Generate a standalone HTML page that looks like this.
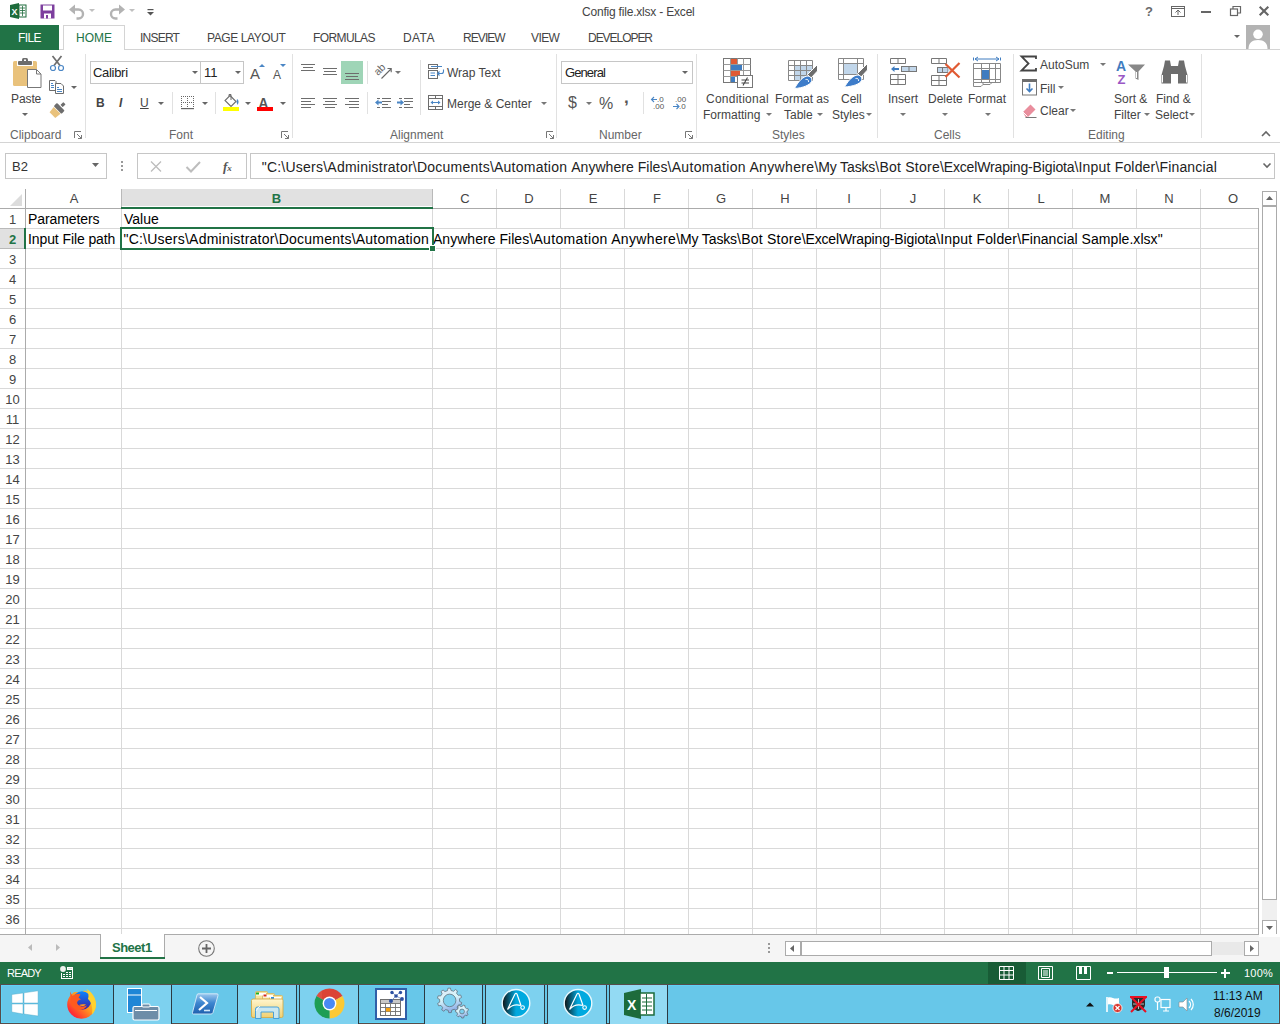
<!DOCTYPE html>
<html><head><meta charset="utf-8"><style>
*{margin:0;padding:0;box-sizing:border-box}
html,body{width:1280px;height:1024px;overflow:hidden;background:#fff;font-family:"Liberation Sans",sans-serif;color:#444}
.a{position:absolute}
.t{position:absolute;white-space:nowrap;line-height:1}
svg{position:absolute;overflow:visible}
.r{font-size:12px;color:#444}
.g{font-size:12px;color:#666}
.dd{position:absolute;width:0;height:0;border-left:3px solid transparent;border-right:3px solid transparent;border-top:3px solid #777}
</style></head><body>
<svg style="left:10px;top:3px" width="17" height="16" viewBox="0 0 17 16"><path d="M0 2 L9 0 L9 16 L0 14 Z" fill="#1d6b3b"/><rect x="9" y="2" width="7" height="12" fill="#fff" stroke="#1d6b3b" stroke-width="1"/><path d="M10 5h5M10 7.5h5M10 10h5M12.5 3v10" stroke="#1d6b3b" stroke-width="0.8"/><text x="1.5" y="11.5" font-size="9" font-weight="bold" fill="#fff" font-family="Liberation Sans">X</text></svg>
<svg style="left:40px;top:4px" width="15" height="15" viewBox="0 0 15 15"><path d="M0.5 0.5h14v14h-14z" fill="#7d3f9e"/><rect x="3" y="1.5" width="9" height="5" fill="#fff"/><rect x="4" y="9.5" width="7" height="5" fill="#fff"/><rect x="6" y="11" width="2" height="3.5" fill="#7d3f9e"/></svg>
<svg style="left:69px;top:4px" width="16" height="14" viewBox="0 0 16 14"><path d="M5 5.5H9.5A4.5 4.5 0 0 1 9.5 14.5H7.5" fill="none" stroke="#b3b3b3" stroke-width="2.4"/><path d="M0 5.5L6 0.5V10.5Z" fill="#b3b3b3"/></svg>
<div class="dd" style="left:89px;top:9px;border-top-color:#c0c0c0"></div>
<svg style="left:109px;top:4px" width="16" height="14" viewBox="0 0 16 14"><path d="M11 5.5H6.5A4.5 4.5 0 0 0 6.5 14.5H8.5" fill="none" stroke="#b3b3b3" stroke-width="2.4"/><path d="M16 5.5L10 0.5V10.5Z" fill="#b3b3b3"/></svg>
<div class="dd" style="left:129px;top:9px;border-top-color:#c0c0c0"></div>
<svg style="left:147px;top:9px" width="7" height="7" viewBox="0 0 7 7"><rect x="0.5" y="0" width="6" height="1.2" fill="#555"/><path d="M0 3 L7 3 L3.5 6.5 Z" fill="#555"/></svg>
<div class="t" style="left:582px;top:6px;font-size:12px;color:#444;letter-spacing:-0.2px">Config file.xlsx - Excel</div>
<div class="t" style="left:1145px;top:5px;font-size:13px;color:#6a6a6a;font-weight:bold">?</div>
<svg style="left:1171px;top:6px" width="14" height="11" viewBox="0 0 14 11"><rect x="0.5" y="0.5" width="13" height="10" fill="none" stroke="#666"/><path d="M1 2.5h12" stroke="#666"/><path d="M7 9V4M4.5 6.5L7 4 9.5 6.5" fill="none" stroke="#666"/></svg>
<div class="a" style="left:1201px;top:11px;width:10px;height:2px;background:#666"></div>
<svg style="left:1230px;top:6px" width="11" height="10" viewBox="0 0 11 10"><rect x="0.5" y="3" width="7" height="6.5" fill="none" stroke="#666" stroke-width="1.2"/><path d="M3 3V0.5h7.5V7H8" fill="none" stroke="#666" stroke-width="1.2"/></svg>
<svg style="left:1259px;top:6px" width="10" height="10" viewBox="0 0 10 10"><path d="M0.7 0.7L9.3 9.3M9.3 0.7L0.7 9.3" stroke="#666" stroke-width="2.1"/></svg>
<div class="a" style="left:0px;top:49px;width:1280px;height:1px;background:#d4d4d4"></div>
<div class="a" style="left:0px;top:25px;width:59px;height:25px;background:#217346"></div>
<div class="t" style="left:18px;top:32px;font-size:12px;color:#fff;letter-spacing:-0.6px">FILE</div>
<div class="a" style="left:63px;top:25px;width:62px;height:25px;border:1px solid #d4d4d4;border-bottom:none;background:#fff"></div>
<div class="t" style="left:76px;top:32px;font-size:12px;color:#217346;">HOME</div>
<div class="t" style="left:140px;top:32px;font-size:12px;color:#444;letter-spacing:-0.77px">INSERT</div>
<div class="t" style="left:207px;top:32px;font-size:12px;color:#444;letter-spacing:-0.42px">PAGE LAYOUT</div>
<div class="t" style="left:313px;top:32px;font-size:12px;color:#444;letter-spacing:-0.6px">FORMULAS</div>
<div class="t" style="left:403px;top:32px;font-size:12px;color:#444;letter-spacing:0.4px">DATA</div>
<div class="t" style="left:463px;top:32px;font-size:12px;color:#444;letter-spacing:-0.93px">REVIEW</div>
<div class="t" style="left:531px;top:32px;font-size:12px;color:#444;letter-spacing:-0.6px">VIEW</div>
<div class="t" style="left:588px;top:32px;font-size:12px;color:#444;letter-spacing:-1.04px">DEVELOPER</div>
<div class="dd" style="left:1234px;top:35px;border-top-color:#666"></div>
<svg style="left:1246px;top:25px" width="24" height="24" viewBox="0 0 24 24"><rect width="24" height="24" fill="#b3b3b3"/><path d="M2.5 24C2.5 18 6 15 12 15C18 15 21.5 18 21.5 24Z" fill="#fff"/><circle cx="12" cy="9.5" r="5.6" fill="#b3b3b3"/><circle cx="12" cy="9.3" r="4.8" fill="#fff"/></svg>
<div class="a" style="left:0px;top:142px;width:1280px;height:1px;background:#d4d4d4"></div>
<div class="a" style="left:85px;top:54px;width:1px;height:84px;background:#e1e1e1"></div>
<div class="a" style="left:292px;top:54px;width:1px;height:84px;background:#e1e1e1"></div>
<div class="a" style="left:556px;top:54px;width:1px;height:84px;background:#e1e1e1"></div>
<div class="a" style="left:696px;top:54px;width:1px;height:84px;background:#e1e1e1"></div>
<div class="a" style="left:877px;top:54px;width:1px;height:84px;background:#e1e1e1"></div>
<div class="a" style="left:1013px;top:54px;width:1px;height:84px;background:#e1e1e1"></div>
<div class="a" style="left:1201px;top:54px;width:1px;height:84px;background:#e1e1e1"></div>
<div class="t" style="left:10px;top:129px;font-size:12px;color:#666;">Clipboard</div>
<div class="t" style="left:169px;top:129px;font-size:12px;color:#666;">Font</div>
<div class="t" style="left:390px;top:129px;font-size:12px;color:#666;">Alignment</div>
<div class="t" style="left:599px;top:129px;font-size:12px;color:#666;">Number</div>
<div class="t" style="left:772px;top:129px;font-size:12px;color:#666;">Styles</div>
<div class="t" style="left:934px;top:129px;font-size:12px;color:#666;">Cells</div>
<div class="t" style="left:1088px;top:129px;font-size:12px;color:#666;">Editing</div>
<svg style="left:74px;top:131px" width="8" height="8" viewBox="0 0 8 8"><path d="M0.5 7V0.5H7" fill="none" stroke="#777"/><path d="M3 3L7.5 7.5M4 7.5H7.5V4" fill="none" stroke="#777"/></svg>
<svg style="left:281px;top:131px" width="8" height="8" viewBox="0 0 8 8"><path d="M0.5 7V0.5H7" fill="none" stroke="#777"/><path d="M3 3L7.5 7.5M4 7.5H7.5V4" fill="none" stroke="#777"/></svg>
<svg style="left:546px;top:131px" width="8" height="8" viewBox="0 0 8 8"><path d="M0.5 7V0.5H7" fill="none" stroke="#777"/><path d="M3 3L7.5 7.5M4 7.5H7.5V4" fill="none" stroke="#777"/></svg>
<svg style="left:685px;top:131px" width="8" height="8" viewBox="0 0 8 8"><path d="M0.5 7V0.5H7" fill="none" stroke="#777"/><path d="M3 3L7.5 7.5M4 7.5H7.5V4" fill="none" stroke="#777"/></svg>
<svg style="left:13px;top:58px" width="29" height="31" viewBox="0 0 29 31"><rect x="0" y="3" width="24" height="25" rx="1.5" fill="#e9c27c"/>
<rect x="4" y="2" width="16" height="6" fill="#fff"/>
<rect x="5" y="3" width="14" height="4" rx="1" fill="#6d6d6d"/><rect x="9" y="0" width="6" height="4" rx="1.5" fill="#6d6d6d"/><rect x="11" y="1.5" width="2" height="1.5" fill="#fff"/>
<path d="M14.5 11.5H23.5L28 16V29.5H14.5Z" fill="#fff" stroke="#777"/><path d="M23.5 11.5V16H28" fill="none" stroke="#777"/></svg>
<div class="t" style="left:11px;top:93px;font-size:12px;color:#444;letter-spacing:-0.1px">Paste</div>
<div class="dd" style="left:22px;top:113px;border-top-color:#666"></div>
<svg style="left:49px;top:55px" width="16" height="16" viewBox="0 0 16 16"><path d="M3.5 1L11 10.5M12.5 1L5 10.5" stroke="#6d6d6d" stroke-width="1.7"/><circle cx="4" cy="13" r="2.5" fill="#fff" stroke="#4a86c5" stroke-width="1.2"/><circle cx="12" cy="13" r="2.5" fill="#fff" stroke="#4a86c5" stroke-width="1.2"/></svg>
<svg style="left:49px;top:80px" width="16" height="15" viewBox="0 0 16 15"><path d="M0.5 0.5H6L7 1.5V10.5H0.5Z" fill="#fff" stroke="#6d6d6d"/><path d="M2 3.5H4M2 5.5H5M2 7.5H5" stroke="#4a86c5"/>
<path d="M6.5 3.5H12L14.5 6V13.5H6.5Z" fill="#fff" stroke="#6d6d6d"/><path d="M8 7.5H10M8 9.5H13M8 11.5H13" stroke="#4a86c5"/></svg>
<div class="dd" style="left:71px;top:86px;border-top-color:#666"></div>
<svg style="left:45px;top:100px" width="22" height="22" viewBox="0 0 22 22"><g transform="translate(14.2 8.4) rotate(45)"><rect x="-5.5" y="-2.3" width="11" height="4.6" rx="1" fill="#6d6d6d"/><path d="M-4.8 2.9H4.8L4 9.6H-4Z" fill="#e9c27c"/><rect x="-1.6" y="-7.4" width="3.2" height="4" rx="0.5" fill="#6d6d6d"/></g></svg>
<div class="a" style="left:90px;top:61px;width:111px;height:23px;border:1px solid #c6c6c6;background:#fff"></div>
<div class="a" style="left:200px;top:61px;width:44px;height:23px;border:1px solid #c6c6c6;background:#fff"></div>
<div class="t" style="left:93px;top:66px;font-size:13px;color:#222;letter-spacing:-0.3px">Calibri</div>
<div class="t" style="left:204px;top:66px;font-size:13px;color:#222;">11</div>
<div class="dd" style="left:192px;top:71px;border-top-color:#666"></div>
<div class="dd" style="left:235px;top:71px;border-top-color:#666"></div>
<div class="t" style="left:250px;top:66px;font-size:15px;color:#555;">A</div>
<svg style="left:259px;top:64px" width="6" height="3" viewBox="0 0 6 3"><path d="M0 3L3 0L6 3Z" fill="#4a86c5"/></svg>
<div class="t" style="left:273px;top:69px;font-size:12px;color:#555;">A</div>
<svg style="left:280px;top:64px" width="6" height="3" viewBox="0 0 6 3"><path d="M0 0L3 3L6 0Z" fill="#4a86c5"/></svg>
<div class="t" style="left:96px;top:97px;font-size:12px;color:#444;font-weight:bold">B</div>
<div class="t" style="left:119px;top:97px;font-size:12px;color:#444;font-style:italic;font-weight:bold">I</div>
<div class="t" style="left:140px;top:97px;font-size:12px;color:#444;text-decoration:underline">U</div>
<div class="dd" style="left:158px;top:102px;border-top-color:#666"></div>
<div class="a" style="left:172px;top:92px;width:1px;height:22px;background:#e1e1e1"></div>
<svg style="left:181px;top:96px" width="14" height="13" viewBox="0 0 14 13"><rect x="0" y="0" width="1" height="1" fill="#666"/><rect x="0" y="6" width="1" height="1" fill="#666"/><rect x="2" y="0" width="1" height="1" fill="#666"/><rect x="2" y="6" width="1" height="1" fill="#666"/><rect x="4" y="0" width="1" height="1" fill="#666"/><rect x="4" y="6" width="1" height="1" fill="#666"/><rect x="6" y="0" width="1" height="1" fill="#666"/><rect x="6" y="6" width="1" height="1" fill="#666"/><rect x="8" y="0" width="1" height="1" fill="#666"/><rect x="8" y="6" width="1" height="1" fill="#666"/><rect x="10" y="0" width="1" height="1" fill="#666"/><rect x="10" y="6" width="1" height="1" fill="#666"/><rect x="12" y="0" width="1" height="1" fill="#666"/><rect x="12" y="6" width="1" height="1" fill="#666"/><rect x="0" y="0" width="1" height="1" fill="#666"/><rect x="6" y="0" width="1" height="1" fill="#666"/><rect x="12" y="0" width="1" height="1" fill="#666"/><rect x="0" y="2" width="1" height="1" fill="#666"/><rect x="6" y="2" width="1" height="1" fill="#666"/><rect x="12" y="2" width="1" height="1" fill="#666"/><rect x="0" y="4" width="1" height="1" fill="#666"/><rect x="6" y="4" width="1" height="1" fill="#666"/><rect x="12" y="4" width="1" height="1" fill="#666"/><rect x="0" y="6" width="1" height="1" fill="#666"/><rect x="6" y="6" width="1" height="1" fill="#666"/><rect x="12" y="6" width="1" height="1" fill="#666"/><rect x="0" y="8" width="1" height="1" fill="#666"/><rect x="6" y="8" width="1" height="1" fill="#666"/><rect x="12" y="8" width="1" height="1" fill="#666"/><rect x="0" y="10" width="1" height="1" fill="#666"/><rect x="6" y="10" width="1" height="1" fill="#666"/><rect x="12" y="10" width="1" height="1" fill="#666"/><rect x="0" y="12" width="13" height="1.2" fill="#666"/></svg>
<div class="dd" style="left:202px;top:102px;border-top-color:#666"></div>
<div class="a" style="left:215px;top:92px;width:1px;height:22px;background:#e1e1e1"></div>
<svg style="left:223px;top:94px" width="17" height="17" viewBox="0 0 17 17"><path d="M7 1.5L13 7.5L8 12.5L2 6.5Z" fill="#fff" stroke="#6d6d6d" stroke-width="1.1"/><path d="M6 2.5V0.5H8V6" fill="none" stroke="#6d6d6d"/><path d="M14 5C16 6 16 9 14.5 11L13.5 8Z" fill="#4a86c5"/><rect x="0" y="13" width="16" height="4" fill="#ffff00"/></svg>
<div class="dd" style="left:245px;top:102px;border-top-color:#666"></div>
<div class="t" style="left:258px;top:95px;font-size:15px;color:#555;font-weight:bold;transform:scaleX(0.9)">A</div>
<div class="a" style="left:257px;top:107px;width:16px;height:4px;background:#ff0000"></div>
<div class="dd" style="left:280px;top:102px;border-top-color:#666"></div>
<svg style="left:301px;top:64px" width="16" height="14" viewBox="0 0 16 14"><rect x="0" y="0" width="14" height="1" fill="#6d6d6d"/><rect x="2" y="3" width="10" height="1" fill="#6d6d6d"/><rect x="0" y="6" width="14" height="1" fill="#6d6d6d"/></svg>
<svg style="left:323px;top:68px" width="16" height="14" viewBox="0 0 16 14"><rect x="0" y="0" width="14" height="1" fill="#6d6d6d"/><rect x="1" y="3" width="12" height="1" fill="#6d6d6d"/><rect x="0" y="6" width="14" height="1" fill="#6d6d6d"/></svg>
<div class="a" style="left:341px;top:61px;width:22px;height:23px;background:#9fd5b7"></div>
<svg style="left:345px;top:73px" width="16" height="14" viewBox="0 0 16 14"><rect x="0" y="0" width="14" height="1" fill="#6d6d6d"/><rect x="1" y="3" width="12" height="1" fill="#6d6d6d"/><rect x="0" y="6" width="14" height="1" fill="#6d6d6d"/></svg>
<div class="a" style="left:367px;top:61px;width:1px;height:23px;background:#e1e1e1"></div>
<svg style="left:375px;top:63px" width="18" height="17" viewBox="0 0 18 17"><text x="-1.5" y="9.5" font-size="10.5" fill="#666" font-family="Liberation Sans" transform="rotate(-45 5 6)">ab</text><path d="M6.5 15.5L16 6M12.5 5.5H16.2V9.2" fill="none" stroke="#666" stroke-width="1.1"/></svg>
<div class="dd" style="left:395px;top:71px;border-top-color:#777"></div>
<svg style="left:301px;top:98px" width="16" height="14" viewBox="0 0 16 14"><rect x="0" y="0" width="14" height="1" fill="#6d6d6d"/><rect x="0" y="3" width="10" height="1" fill="#6d6d6d"/><rect x="0" y="6" width="14" height="1" fill="#6d6d6d"/><rect x="0" y="9" width="10" height="1" fill="#6d6d6d"/></svg>
<svg style="left:323px;top:98px" width="16" height="14" viewBox="0 0 16 14"><rect x="0" y="0" width="14" height="1" fill="#6d6d6d"/><rect x="2" y="3" width="10" height="1" fill="#6d6d6d"/><rect x="0" y="6" width="14" height="1" fill="#6d6d6d"/><rect x="2" y="9" width="10" height="1" fill="#6d6d6d"/></svg>
<svg style="left:345px;top:98px" width="16" height="14" viewBox="0 0 16 14"><rect x="0" y="0" width="14" height="1" fill="#6d6d6d"/><rect x="4" y="3" width="10" height="1" fill="#6d6d6d"/><rect x="0" y="6" width="14" height="1" fill="#6d6d6d"/><rect x="4" y="9" width="10" height="1" fill="#6d6d6d"/></svg>
<div class="a" style="left:367px;top:92px;width:1px;height:22px;background:#e1e1e1"></div>
<svg style="left:375px;top:97px" width="16" height="12" viewBox="0 0 16 12"><rect x="2" y="1" width="3" height="1" fill="#6d6d6d"/><rect x="7" y="1" width="9" height="1" fill="#6d6d6d"/><rect x="7" y="4" width="9" height="1" fill="#6d6d6d"/><rect x="7" y="7" width="6" height="1" fill="#6d6d6d"/><rect x="2" y="10" width="3" height="1" fill="#6d6d6d"/><rect x="7" y="10" width="9" height="1" fill="#6d6d6d"/><path d="M0 5.5L3.5 2.5V4.5H7V6.5H3.5V8.5Z" fill="#4a86c5"/></svg>
<svg style="left:397px;top:97px" width="16" height="12" viewBox="0 0 16 12"><rect x="2" y="1" width="3" height="1" fill="#6d6d6d"/><rect x="7" y="1" width="9" height="1" fill="#6d6d6d"/><rect x="7" y="4" width="9" height="1" fill="#6d6d6d"/><rect x="7" y="7" width="6" height="1" fill="#6d6d6d"/><rect x="2" y="10" width="3" height="1" fill="#6d6d6d"/><rect x="7" y="10" width="9" height="1" fill="#6d6d6d"/><path d="M7 5.5L3.5 2.5V4.5H0V6.5H3.5V8.5Z" fill="#4a86c5"/></svg>
<div class="a" style="left:420px;top:60px;width:1px;height:55px;background:#e1e1e1"></div>
<svg style="left:428px;top:64px" width="17" height="15" viewBox="0 0 17 15"><rect x="0.5" y="0.5" width="9" height="4" fill="#fff" stroke="#6d6d6d"/><rect x="0.5" y="6.5" width="9" height="8" fill="#fff" stroke="#6d6d6d"/><path d="M3 2.5H14M2.5 9H7M2.5 11.5H7" stroke="#4a86c5"/><path d="M15.5 5.5V7.5A2 2 0 0 1 13.5 9.5H9.5M11.5 7.5L9.5 9.5L11.5 11.5" fill="none" stroke="#4a86c5" stroke-width="1.1"/></svg>
<div class="t" style="left:447px;top:67px;font-size:12px;color:#444;">Wrap Text</div>
<svg style="left:428px;top:95px" width="16" height="16" viewBox="0 0 16 16"><rect x="0.5" y="0.5" width="14" height="14" fill="#fff" stroke="#6d6d6d"/><path d="M0.5 3.5H14.5M0.5 11.5H14.5M7.5 0.5V3.5M7.5 11.5V14.5" stroke="#6d6d6d"/><path d="M3 7.5H12" stroke="#4a86c5"/><path d="M2.5 7.5L5 5.5V9.5ZM12.5 7.5L10 5.5V9.5Z" fill="#4a86c5"/></svg>
<div class="t" style="left:447px;top:98px;font-size:12px;color:#444;">Merge &amp; Center</div>
<div class="dd" style="left:541px;top:102px;border-top-color:#777"></div>
<div class="a" style="left:561px;top:61px;width:132px;height:23px;border:1px solid #c6c6c6;background:#fff"></div>
<div class="t" style="left:565px;top:66px;font-size:13px;color:#222;letter-spacing:-0.9px">General</div>
<div class="dd" style="left:682px;top:71px;border-top-color:#666"></div>
<div class="t" style="left:568px;top:95px;font-size:16px;color:#555;">$</div>
<div class="dd" style="left:586px;top:102px;border-top-color:#777"></div>
<div class="t" style="left:599px;top:96px;font-size:16px;color:#555;">%</div>
<div class="t" style="left:624px;top:89px;font-size:17px;color:#555;font-weight:bold">,</div>
<div class="a" style="left:643px;top:92px;width:1px;height:22px;background:#e1e1e1"></div>
<svg style="left:651px;top:96px" width="15" height="14" viewBox="0 0 15 14"><text x="6" y="6" font-size="8" fill="#555" font-family="Liberation Sans">.0</text><text x="2" y="13" font-size="8" fill="#555" font-family="Liberation Sans">.00</text><path d="M0.5 3.5H6M3 1L0.5 3.5L3 6" fill="none" stroke="#4a86c5" stroke-width="1.1"/></svg>
<svg style="left:673px;top:96px" width="15" height="14" viewBox="0 0 15 14"><text x="2" y="6" font-size="8" fill="#555" font-family="Liberation Sans">.00</text><text x="6" y="13" font-size="8" fill="#555" font-family="Liberation Sans">.0</text><path d="M0 10.5H6M3.5 8L6 10.5L3.5 13" fill="none" stroke="#4a86c5" stroke-width="1.1"/></svg>
<svg style="left:723px;top:58px" width="30" height="30" viewBox="0 0 30 30"><rect x="0.5" y="0.5" width="27" height="24" fill="#fff" stroke="#777"/>
<rect x="8" y="1" width="6" height="5" fill="#e05a33"/><rect x="8" y="7" width="11" height="5" fill="#3f7cc0"/><rect x="8" y="13" width="9" height="5" fill="#e05a33"/><rect x="8" y="19" width="4" height="5" fill="#3f7cc0"/>
<path d="M0.5 6.5H27.5M0.5 12.5H27.5M0.5 18.5H27.5M7.5 0.5V24.5M14.5 0.5V24.5M20.5 0.5V24.5" stroke="#999" fill="none"/>
<rect x="8" y="7" width="11" height="5" fill="#3f7cc0"/><rect x="8" y="13" width="9" height="5" fill="#e05a33"/><rect x="8" y="1" width="6" height="5" fill="#e05a33"/><rect x="8" y="19" width="4" height="5" fill="#3f7cc0"/>
<rect x="14.5" y="17.5" width="15" height="12" fill="#fff" stroke="#777"/><path d="M18.5 22H26M18.5 25H26M24.5 19.5L20 27.5" stroke="#444" stroke-width="1.1" fill="none"/></svg>
<div class="t" style="left:706px;top:93px;font-size:12px;color:#444;letter-spacing:0.25px">Conditional</div>
<div class="t" style="left:703px;top:109px;font-size:12px;color:#444;">Formatting</div>
<div class="dd" style="left:766px;top:113px;border-top-color:#777"></div>
<svg style="left:788px;top:60px" width="30" height="29" viewBox="0 0 30 29"><rect x="6" y="5" width="19" height="15" fill="#c1d6ea"/>
<path d="M0.5 0.5H24.5V20.5H0.5Z M0.5 5.5H24.5M0.5 10.5H24.5M0.5 15.5H24.5M6.5 0.5V20.5M12.5 0.5V20.5M18.5 0.5V20.5" stroke="#888" fill="none"/>
<path d="M29.5 4.5L29.5 11L23 18L19.5 14.5Z" fill="#6d6d6d" stroke="#fff" stroke-width="1"/><path d="M19 16C22.5 16 24.5 18.5 23.5 21.5C22 25 15 28 6.5 28.5C9 24 13 17.5 19 16Z" fill="#3d7cc9" stroke="#fff" stroke-width="1"/><path d="M17.5 19.5C19.5 19 21 20 20.5 22" fill="none" stroke="#fff" stroke-width="0.9"/></svg>
<div class="t" style="left:775px;top:93px;font-size:12px;color:#444;">Format as</div>
<div class="t" style="left:784px;top:109px;font-size:12px;color:#444;">Table</div>
<div class="dd" style="left:817px;top:113px;border-top-color:#777"></div>
<svg style="left:838px;top:58px" width="30" height="29" viewBox="0 0 30 29"><rect x="6" y="6" width="13" height="10" fill="#c1d6ea"/>
<path d="M0.5 0.5H25.5V21.5H0.5Z M0.5 5.5H25.5M0.5 16.5H25.5M5.5 0.5V21.5M19.5 0.5V21.5" stroke="#888" fill="none"/>
<path d="M29.5 5.5L29.5 12L23 19L19.5 15.5Z" fill="#6d6d6d" stroke="#fff" stroke-width="1"/><path d="M19 17C22.5 17 24.5 19.5 23.5 22.5C22 26 15 28.5 6.5 29C9 25 13 18.5 19 17Z" fill="#3d7cc9" stroke="#fff" stroke-width="1"/><path d="M17.5 20.5C19.5 20 21 21 20.5 23" fill="none" stroke="#fff" stroke-width="0.9"/></svg>
<div class="t" style="left:841px;top:93px;font-size:12px;color:#444;">Cell</div>
<div class="t" style="left:832px;top:109px;font-size:12px;color:#444;">Styles</div>
<div class="dd" style="left:866px;top:113px;border-top-color:#777"></div>
<svg style="left:890px;top:58px" width="27" height="28" viewBox="0 0 27 28"><path d="M0.5 0.5H15.5V5.5H0.5ZM8 0.5V5.5" fill="none" stroke="#777"/>
<rect x="11.5" y="8.5" width="15" height="5" fill="#c1d6ea" stroke="#777"/><path d="M19 8.5V13.5" stroke="#777"/>
<path d="M1 11L4.5 8V10H9V12H4.5V14Z" fill="#3f7cc0"/>
<path d="M0.5 16.5H15.5V26.5H0.5ZM0.5 21.5H15.5M8 16.5V26.5" fill="none" stroke="#777"/></svg>
<div class="t" style="left:888px;top:93px;font-size:12px;color:#444;">Insert</div>
<div class="dd" style="left:900px;top:113px;border-top-color:#777"></div>
<svg style="left:931px;top:58px" width="30" height="29" viewBox="0 0 30 29"><path d="M0.5 0.5H15.5V5.5H0.5ZM8 0.5V5.5" fill="none" stroke="#777"/>
<rect x="6.5" y="9.5" width="10" height="5" fill="#c1d6ea" stroke="#777"/><path d="M11.5 9.5V14.5" stroke="#777"/><path d="M16.5 9.5L19 12L16.5 14.5Z" fill="#c1d6ea"/>
<path d="M0.5 17.5H15.5V27.5H0.5ZM0.5 22.5H15.5M8 17.5V27.5" fill="none" stroke="#777"/>
<path d="M14.5 6L28.5 19.5M28.5 5L14.5 19" stroke="#e05a33" stroke-width="2.2"/></svg>
<div class="t" style="left:928px;top:93px;font-size:12px;color:#444;">Delete</div>
<div class="dd" style="left:942px;top:113px;border-top-color:#777"></div>
<svg style="left:973px;top:57px" width="29" height="31" viewBox="0 0 29 31"><path d="M0.5 0.5V3.5M27.5 0.5V3.5M2 2H26M5 0L2 2L5 4M23 0L26 2L23 4" fill="none" stroke="#3f7cc0"/>
<rect x="9" y="13" width="7" height="9" fill="#3f7cc0"/>
<path d="M0.5 6.5H27.5V25.5H0.5ZM0.5 11.5H27.5M0.5 22.5H27.5M8.5 6.5V25.5M16.5 6.5V25.5M22.5 6.5V25.5" fill="none" stroke="#888"/>
<path d="M0.5 25.5V29.5H8L10 27.5V25.5M10 27.5H17L19 25.5" fill="none" stroke="#888"/></svg>
<div class="t" style="left:968px;top:93px;font-size:12px;color:#444;">Format</div>
<div class="dd" style="left:985px;top:113px;border-top-color:#777"></div>
<svg style="left:1021px;top:56px" width="16" height="16" viewBox="0 0 16 16"><path d="M15 3V0.5H0.5L7.5 7.5L0.5 14.5H15V12" fill="none" stroke="#444" stroke-width="1.8"/></svg>
<div class="t" style="left:1040px;top:59px;font-size:12px;color:#444;">AutoSum</div>
<div class="dd" style="left:1100px;top:63px;border-top-color:#777"></div>
<svg style="left:1022px;top:79px" width="15" height="17" viewBox="0 0 15 17"><rect x="0.5" y="0.5" width="14" height="15.5" fill="#fff" stroke="#777"/><rect x="0" y="0" width="15" height="3" fill="#6d6d6d"/><path d="M7.5 4.5V12.5M4.5 9.5L7.5 12.5L10.5 9.5" fill="none" stroke="#3f7cc0" stroke-width="1.6"/></svg>
<div class="t" style="left:1040px;top:83px;font-size:12px;color:#444;">Fill</div>
<div class="dd" style="left:1058px;top:86px;border-top-color:#777"></div>
<svg style="left:1022px;top:103px" width="15" height="15" viewBox="0 0 15 15"><path d="M1 9L8.5 1.5L13.5 6.5L6 14H3.5Z" fill="#e98e9d"/><path d="M3.5 14.5H14.5" stroke="#777"/><path d="M1 9L5.5 13.5" stroke="#fff" stroke-width="1"/></svg>
<div class="t" style="left:1040px;top:105px;font-size:12px;color:#444;">Clear</div>
<div class="dd" style="left:1070px;top:109px;border-top-color:#777"></div>
<svg style="left:1116px;top:58px" width="30" height="27" viewBox="0 0 30 27"><text x="0" y="12.5" font-size="14" font-weight="bold" fill="#3f7cc0" font-family="Liberation Sans">A</text><text x="1.5" y="26" font-size="13" font-weight="bold" fill="#9a57c5" font-family="Liberation Sans">Z</text>
<path d="M12 6.5H29L22.5 13.5V22L19.5 20.5V13.5Z" fill="#888"/><path d="M20.5 14V20" stroke="#fff"/></svg>
<div class="t" style="left:1114px;top:93px;font-size:12px;color:#444;">Sort &amp;</div>
<div class="t" style="left:1114px;top:109px;font-size:12px;color:#444;">Filter</div>
<div class="dd" style="left:1144px;top:113px;border-top-color:#777"></div>
<svg style="left:1161px;top:60px" width="27" height="24" viewBox="0 0 27 24"><path d="M3 6L4 0.5H9L10 6H17L18 0.5H23L24 6L26.5 15V23.5H17V12H10V23.5H0.5V15Z" fill="#6d6d6d"/>
<path d="M1.5 15V22.5M25.5 15V22.5" stroke="#fff"/><rect x="10" y="8" width="7" height="6" fill="#6d6d6d"/></svg>
<div class="t" style="left:1156px;top:93px;font-size:12px;color:#444;">Find &amp;</div>
<div class="t" style="left:1155px;top:109px;font-size:12px;color:#444;">Select</div>
<div class="dd" style="left:1189px;top:113px;border-top-color:#777"></div>
<svg style="left:1261px;top:130px" width="10" height="7" viewBox="0 0 10 7"><path d="M1 6L5 2L9 6" fill="none" stroke="#666" stroke-width="1.6"/></svg>
<div class="a" style="left:121px;top:189px;width:312px;height:17px;background:#e1e1e1"></div>
<div class="a" style="left:0px;top:228px;width:25px;height:20px;background:#e1e1e1"></div>
<div class="a" style="left:121px;top:189px;width:1px;height:745px;background:#d9d9d9"></div>
<div class="a" style="left:432px;top:189px;width:1px;height:745px;background:#d9d9d9"></div>
<div class="a" style="left:496px;top:189px;width:1px;height:39px;background:#d9d9d9"></div>
<div class="a" style="left:496px;top:248px;width:1px;height:686px;background:#d9d9d9"></div>
<div class="a" style="left:560px;top:189px;width:1px;height:39px;background:#d9d9d9"></div>
<div class="a" style="left:560px;top:248px;width:1px;height:686px;background:#d9d9d9"></div>
<div class="a" style="left:624px;top:189px;width:1px;height:39px;background:#d9d9d9"></div>
<div class="a" style="left:624px;top:248px;width:1px;height:686px;background:#d9d9d9"></div>
<div class="a" style="left:688px;top:189px;width:1px;height:39px;background:#d9d9d9"></div>
<div class="a" style="left:688px;top:248px;width:1px;height:686px;background:#d9d9d9"></div>
<div class="a" style="left:752px;top:189px;width:1px;height:39px;background:#d9d9d9"></div>
<div class="a" style="left:752px;top:248px;width:1px;height:686px;background:#d9d9d9"></div>
<div class="a" style="left:816px;top:189px;width:1px;height:39px;background:#d9d9d9"></div>
<div class="a" style="left:816px;top:248px;width:1px;height:686px;background:#d9d9d9"></div>
<div class="a" style="left:880px;top:189px;width:1px;height:39px;background:#d9d9d9"></div>
<div class="a" style="left:880px;top:248px;width:1px;height:686px;background:#d9d9d9"></div>
<div class="a" style="left:944px;top:189px;width:1px;height:39px;background:#d9d9d9"></div>
<div class="a" style="left:944px;top:248px;width:1px;height:686px;background:#d9d9d9"></div>
<div class="a" style="left:1008px;top:189px;width:1px;height:39px;background:#d9d9d9"></div>
<div class="a" style="left:1008px;top:248px;width:1px;height:686px;background:#d9d9d9"></div>
<div class="a" style="left:1072px;top:189px;width:1px;height:39px;background:#d9d9d9"></div>
<div class="a" style="left:1072px;top:248px;width:1px;height:686px;background:#d9d9d9"></div>
<div class="a" style="left:1136px;top:189px;width:1px;height:39px;background:#d9d9d9"></div>
<div class="a" style="left:1136px;top:248px;width:1px;height:686px;background:#d9d9d9"></div>
<div class="a" style="left:1200px;top:189px;width:1px;height:745px;background:#d9d9d9"></div>
<div class="a" style="left:0px;top:228px;width:1258px;height:1px;background:#d9d9d9"></div>
<div class="a" style="left:0px;top:248px;width:1258px;height:1px;background:#d9d9d9"></div>
<div class="a" style="left:0px;top:268px;width:1258px;height:1px;background:#d9d9d9"></div>
<div class="a" style="left:0px;top:288px;width:1258px;height:1px;background:#d9d9d9"></div>
<div class="a" style="left:0px;top:308px;width:1258px;height:1px;background:#d9d9d9"></div>
<div class="a" style="left:0px;top:328px;width:1258px;height:1px;background:#d9d9d9"></div>
<div class="a" style="left:0px;top:348px;width:1258px;height:1px;background:#d9d9d9"></div>
<div class="a" style="left:0px;top:368px;width:1258px;height:1px;background:#d9d9d9"></div>
<div class="a" style="left:0px;top:388px;width:1258px;height:1px;background:#d9d9d9"></div>
<div class="a" style="left:0px;top:408px;width:1258px;height:1px;background:#d9d9d9"></div>
<div class="a" style="left:0px;top:428px;width:1258px;height:1px;background:#d9d9d9"></div>
<div class="a" style="left:0px;top:448px;width:1258px;height:1px;background:#d9d9d9"></div>
<div class="a" style="left:0px;top:468px;width:1258px;height:1px;background:#d9d9d9"></div>
<div class="a" style="left:0px;top:488px;width:1258px;height:1px;background:#d9d9d9"></div>
<div class="a" style="left:0px;top:508px;width:1258px;height:1px;background:#d9d9d9"></div>
<div class="a" style="left:0px;top:528px;width:1258px;height:1px;background:#d9d9d9"></div>
<div class="a" style="left:0px;top:548px;width:1258px;height:1px;background:#d9d9d9"></div>
<div class="a" style="left:0px;top:568px;width:1258px;height:1px;background:#d9d9d9"></div>
<div class="a" style="left:0px;top:588px;width:1258px;height:1px;background:#d9d9d9"></div>
<div class="a" style="left:0px;top:608px;width:1258px;height:1px;background:#d9d9d9"></div>
<div class="a" style="left:0px;top:628px;width:1258px;height:1px;background:#d9d9d9"></div>
<div class="a" style="left:0px;top:648px;width:1258px;height:1px;background:#d9d9d9"></div>
<div class="a" style="left:0px;top:668px;width:1258px;height:1px;background:#d9d9d9"></div>
<div class="a" style="left:0px;top:688px;width:1258px;height:1px;background:#d9d9d9"></div>
<div class="a" style="left:0px;top:708px;width:1258px;height:1px;background:#d9d9d9"></div>
<div class="a" style="left:0px;top:728px;width:1258px;height:1px;background:#d9d9d9"></div>
<div class="a" style="left:0px;top:748px;width:1258px;height:1px;background:#d9d9d9"></div>
<div class="a" style="left:0px;top:768px;width:1258px;height:1px;background:#d9d9d9"></div>
<div class="a" style="left:0px;top:788px;width:1258px;height:1px;background:#d9d9d9"></div>
<div class="a" style="left:0px;top:808px;width:1258px;height:1px;background:#d9d9d9"></div>
<div class="a" style="left:0px;top:828px;width:1258px;height:1px;background:#d9d9d9"></div>
<div class="a" style="left:0px;top:848px;width:1258px;height:1px;background:#d9d9d9"></div>
<div class="a" style="left:0px;top:868px;width:1258px;height:1px;background:#d9d9d9"></div>
<div class="a" style="left:0px;top:888px;width:1258px;height:1px;background:#d9d9d9"></div>
<div class="a" style="left:0px;top:908px;width:1258px;height:1px;background:#d9d9d9"></div>
<div class="a" style="left:0px;top:928px;width:1258px;height:1px;background:#d9d9d9"></div>
<div class="a" style="left:0px;top:208px;width:1258px;height:1px;background:#ababab"></div>
<div class="a" style="left:25px;top:189px;width:1px;height:745px;background:#ababab"></div>
<div class="a" style="left:1258px;top:208px;width:1px;height:726px;background:#ababab"></div>
<div class="a" style="left:121px;top:207px;width:312px;height:2px;background:#217346"></div>
<div class="a" style="left:121px;top:189px;width:1px;height:18px;background:#b9b9b9"></div>
<div class="a" style="left:432px;top:189px;width:1px;height:18px;background:#b9b9b9"></div>
<div class="a" style="left:0px;top:228px;width:24px;height:1px;background:#b9b9b9"></div>
<div class="a" style="left:0px;top:248px;width:24px;height:1px;background:#b9b9b9"></div>
<div class="a" style="left:24px;top:228px;width:2px;height:21px;background:#217346"></div>
<div class="t" style="left:26px;top:192px;width:96px;text-align:center;font-size:13px;color:#444">A</div>
<div class="t" style="left:121px;top:192px;width:311px;text-align:center;font-size:13px;color:#217346;font-weight:bold">B</div>
<div class="t" style="left:433px;top:192px;width:64px;text-align:center;font-size:13px;color:#444">C</div>
<div class="t" style="left:497px;top:192px;width:64px;text-align:center;font-size:13px;color:#444">D</div>
<div class="t" style="left:561px;top:192px;width:64px;text-align:center;font-size:13px;color:#444">E</div>
<div class="t" style="left:625px;top:192px;width:64px;text-align:center;font-size:13px;color:#444">F</div>
<div class="t" style="left:689px;top:192px;width:64px;text-align:center;font-size:13px;color:#444">G</div>
<div class="t" style="left:753px;top:192px;width:64px;text-align:center;font-size:13px;color:#444">H</div>
<div class="t" style="left:817px;top:192px;width:64px;text-align:center;font-size:13px;color:#444">I</div>
<div class="t" style="left:881px;top:192px;width:64px;text-align:center;font-size:13px;color:#444">J</div>
<div class="t" style="left:945px;top:192px;width:64px;text-align:center;font-size:13px;color:#444">K</div>
<div class="t" style="left:1009px;top:192px;width:64px;text-align:center;font-size:13px;color:#444">L</div>
<div class="t" style="left:1073px;top:192px;width:64px;text-align:center;font-size:13px;color:#444">M</div>
<div class="t" style="left:1137px;top:192px;width:64px;text-align:center;font-size:13px;color:#444">N</div>
<div class="t" style="left:1201px;top:192px;width:64px;text-align:center;font-size:13px;color:#444">O</div>
<svg style="left:10px;top:194px" width="12" height="12" viewBox="0 0 12 12"><path d="M12 0 L12 12 L0 12 Z" fill="#dcdcdc"/></svg>
<div class="t" style="left:1px;top:213px;width:23px;text-align:center;font-size:13px;color:#444">1</div>
<div class="t" style="left:1px;top:233px;width:23px;text-align:center;font-size:13px;color:#217346;font-weight:bold">2</div>
<div class="t" style="left:1px;top:253px;width:23px;text-align:center;font-size:13px;color:#444">3</div>
<div class="t" style="left:1px;top:273px;width:23px;text-align:center;font-size:13px;color:#444">4</div>
<div class="t" style="left:1px;top:293px;width:23px;text-align:center;font-size:13px;color:#444">5</div>
<div class="t" style="left:1px;top:313px;width:23px;text-align:center;font-size:13px;color:#444">6</div>
<div class="t" style="left:1px;top:333px;width:23px;text-align:center;font-size:13px;color:#444">7</div>
<div class="t" style="left:1px;top:353px;width:23px;text-align:center;font-size:13px;color:#444">8</div>
<div class="t" style="left:1px;top:373px;width:23px;text-align:center;font-size:13px;color:#444">9</div>
<div class="t" style="left:1px;top:393px;width:23px;text-align:center;font-size:13px;color:#444">10</div>
<div class="t" style="left:1px;top:413px;width:23px;text-align:center;font-size:13px;color:#444">11</div>
<div class="t" style="left:1px;top:433px;width:23px;text-align:center;font-size:13px;color:#444">12</div>
<div class="t" style="left:1px;top:453px;width:23px;text-align:center;font-size:13px;color:#444">13</div>
<div class="t" style="left:1px;top:473px;width:23px;text-align:center;font-size:13px;color:#444">14</div>
<div class="t" style="left:1px;top:493px;width:23px;text-align:center;font-size:13px;color:#444">15</div>
<div class="t" style="left:1px;top:513px;width:23px;text-align:center;font-size:13px;color:#444">16</div>
<div class="t" style="left:1px;top:533px;width:23px;text-align:center;font-size:13px;color:#444">17</div>
<div class="t" style="left:1px;top:553px;width:23px;text-align:center;font-size:13px;color:#444">18</div>
<div class="t" style="left:1px;top:573px;width:23px;text-align:center;font-size:13px;color:#444">19</div>
<div class="t" style="left:1px;top:593px;width:23px;text-align:center;font-size:13px;color:#444">20</div>
<div class="t" style="left:1px;top:613px;width:23px;text-align:center;font-size:13px;color:#444">21</div>
<div class="t" style="left:1px;top:633px;width:23px;text-align:center;font-size:13px;color:#444">22</div>
<div class="t" style="left:1px;top:653px;width:23px;text-align:center;font-size:13px;color:#444">23</div>
<div class="t" style="left:1px;top:673px;width:23px;text-align:center;font-size:13px;color:#444">24</div>
<div class="t" style="left:1px;top:693px;width:23px;text-align:center;font-size:13px;color:#444">25</div>
<div class="t" style="left:1px;top:713px;width:23px;text-align:center;font-size:13px;color:#444">26</div>
<div class="t" style="left:1px;top:733px;width:23px;text-align:center;font-size:13px;color:#444">27</div>
<div class="t" style="left:1px;top:753px;width:23px;text-align:center;font-size:13px;color:#444">28</div>
<div class="t" style="left:1px;top:773px;width:23px;text-align:center;font-size:13px;color:#444">29</div>
<div class="t" style="left:1px;top:793px;width:23px;text-align:center;font-size:13px;color:#444">30</div>
<div class="t" style="left:1px;top:813px;width:23px;text-align:center;font-size:13px;color:#444">31</div>
<div class="t" style="left:1px;top:833px;width:23px;text-align:center;font-size:13px;color:#444">32</div>
<div class="t" style="left:1px;top:853px;width:23px;text-align:center;font-size:13px;color:#444">33</div>
<div class="t" style="left:1px;top:873px;width:23px;text-align:center;font-size:13px;color:#444">34</div>
<div class="t" style="left:1px;top:893px;width:23px;text-align:center;font-size:13px;color:#444">35</div>
<div class="t" style="left:1px;top:913px;width:23px;text-align:center;font-size:13px;color:#444">36</div>
<div class="t" style="left:28px;top:212px;font-size:14px;color:#000;letter-spacing:-0.1px">Parameters</div>
<div class="t" style="left:124px;top:212px;font-size:14px;color:#000;">Value</div>
<div class="t" style="left:28px;top:232px;font-size:14px;color:#000;letter-spacing:-0.1px">Input File path</div>
<div class="t" style="left:123.45px;top:232px;font-size:14px;color:#000;letter-spacing:0.234px">"C:\Users\Administrator\Documents\Automation</div>
<div class="t" style="left:432.95px;top:232px;font-size:14px;color:#000;letter-spacing:0.039px">Anywhere Files</div>
<div class="t" style="left:529.2px;top:232px;font-size:14px;color:#000;letter-spacing:0.345px">\Automation Anywhere</div>
<div class="t" style="left:676.2px;top:232px;font-size:14px;color:#000;letter-spacing:-0.131px">\My Tasks</div>
<div class="t" style="left:737.0px;top:232px;font-size:14px;color:#000;letter-spacing:0.243px">\Bot Store</div>
<div class="t" style="left:801.7px;top:232px;font-size:14px;color:#000;letter-spacing:-0.142px">\ExcelWraping-Bigiota</div>
<div class="t" style="left:936.2px;top:232px;font-size:14px;color:#000;letter-spacing:0.184px">\Input Folder</div>
<div class="t" style="left:1017.2px;top:232px;font-size:14px;color:#000;letter-spacing:0.054px">\Financial Sample.xlsx"</div>
<div class="a" style="left:120px;top:227px;width:314px;height:23px;border:2px solid #217346"></div>
<div class="a" style="left:429px;top:245px;width:7px;height:7px;background:#fff"></div>
<div class="a" style="left:430px;top:246px;width:5px;height:5px;background:#217346"></div>
<div class="a" style="left:1262px;top:191px;width:15px;height:15px;border:1px solid #ababab;background:#fff"></div>
<svg style="left:1266px;top:196px" width="7" height="4" viewBox="0 0 7 4"><path d="M0 4H7L3.5 0Z" fill="#666"/></svg>
<div class="a" style="left:1262px;top:206px;width:15px;height:694px;border:1px solid #ababab;background:#fff"></div>
<div class="a" style="left:1262px;top:900px;width:15px;height:20px;background:#f0f0f0"></div>
<div class="a" style="left:1262px;top:920px;width:15px;height:15px;border:1px solid #ababab;background:#fff"></div>
<svg style="left:1266px;top:926px" width="7" height="4" viewBox="0 0 7 4"><path d="M0 0H7L3.5 4Z" fill="#666"/></svg>
<div class="a" style="left:5px;top:153px;width:102px;height:26px;border:1px solid #c6c6c6"></div>
<div class="t" style="left:12px;top:160px;font-size:13px;color:#333;">B2</div>
<svg style="left:92px;top:163px" width="8" height="5" viewBox="0 0 8 5"><path d="M0 0H7L3.5 4Z" fill="#666"/></svg>
<div class="a" style="left:121px;top:161px;width:2px;height:2px;background:#999"></div>
<div class="a" style="left:121px;top:165px;width:2px;height:2px;background:#999"></div>
<div class="a" style="left:121px;top:169px;width:2px;height:2px;background:#999"></div>
<div class="a" style="left:137px;top:153px;width:110px;height:26px;border:1px solid #c6c6c6"></div>
<svg style="left:150px;top:161px" width="12" height="11" viewBox="0 0 12 11"><path d="M1 0.5L11 10.5M11 0.5L1 10.5" stroke="#bdbdbd" stroke-width="1.3"/></svg>
<svg style="left:186px;top:161px" width="15" height="12" viewBox="0 0 15 12"><path d="M0.5 6L5 10.5L14 1" fill="none" stroke="#bdbdbd" stroke-width="2"/></svg>
<div class="t" style="left:223px;top:160px;font-size:13px;color:#555;font-family:'Liberation Serif';font-style:italic;font-weight:bold">f<span style="font-size:9px">x</span></div>
<div class="a" style="left:250px;top:153px;width:1025px;height:26px;border:1px solid #c6c6c6"></div>
<div class="t" style="left:261.7px;top:160px;font-size:14px;color:#222;letter-spacing:0.234px">"C:\Users\Administrator\Documents\Automation</div>
<div class="t" style="left:571.2px;top:160px;font-size:14px;color:#222;letter-spacing:0.039px">Anywhere Files</div>
<div class="t" style="left:667.45px;top:160px;font-size:14px;color:#222;letter-spacing:0.345px">\Automation Anywhere</div>
<div class="t" style="left:814.45px;top:160px;font-size:14px;color:#222;letter-spacing:-0.131px">\My Tasks</div>
<div class="t" style="left:875.25px;top:160px;font-size:14px;color:#222;letter-spacing:0.243px">\Bot Store</div>
<div class="t" style="left:939.95px;top:160px;font-size:14px;color:#222;letter-spacing:-0.142px">\ExcelWraping-Bigiota</div>
<div class="t" style="left:1074.45px;top:160px;font-size:14px;color:#222;letter-spacing:0.184px">\Input Folder</div>
<div class="t" style="left:1155.45px;top:160px;font-size:14px;color:#222;letter-spacing:0.158px">\Financial</div>
<svg style="left:1263px;top:163px" width="8" height="6" viewBox="0 0 8 6"><path d="M0.5 0.5L4 4L7.5 0.5" fill="none" stroke="#666" stroke-width="1.6"/></svg>
<div class="a" style="left:0px;top:935px;width:1280px;height:27px;background:#f5f5f5"></div>
<div class="a" style="left:0px;top:934px;width:100px;height:1px;background:#ababab"></div>
<div class="a" style="left:165px;top:934px;width:1094px;height:1px;background:#ababab"></div>
<div class="a" style="left:1259px;top:934px;width:21px;height:3px;background:#fff"></div>
<div class="a" style="left:100px;top:934px;width:65px;height:25px;background:#fff;border:1px solid #ababab;border-top:none"></div>
<div class="a" style="left:100px;top:957px;width:65px;height:2px;background:#217346"></div>
<div class="t" style="left:112px;top:941px;font-size:13px;color:#217346;font-weight:bold;letter-spacing:-0.5px">Sheet1</div>
<svg style="left:28px;top:944px" width="4" height="7" viewBox="0 0 4 7"><path d="M4 0V7L0 3.5Z" fill="#bbb"/></svg>
<svg style="left:56px;top:944px" width="4" height="7" viewBox="0 0 4 7"><path d="M0 0V7L4 3.5Z" fill="#bbb"/></svg>
<svg style="left:198px;top:940px" width="17" height="17" viewBox="0 0 17 17"><circle cx="8.5" cy="8.5" r="7.8" fill="none" stroke="#777" stroke-width="1.1"/><path d="M8.5 4V13M4 8.5H13" stroke="#666" stroke-width="1.8"/></svg>
<div class="a" style="left:768px;top:943px;width:2px;height:2px;background:#999"></div>
<div class="a" style="left:768px;top:947px;width:2px;height:2px;background:#999"></div>
<div class="a" style="left:768px;top:951px;width:2px;height:2px;background:#999"></div>
<div class="a" style="left:785px;top:941px;width:16px;height:15px;border:1px solid #ababab;background:#fff"></div>
<div class="a" style="left:800px;top:941px;width:412px;height:15px;border:1px solid #ababab;border-left-width:2px;background:#fff"></div>
<div class="a" style="left:1212px;top:942px;width:32px;height:13px;background:#e9e9e9"></div>
<div class="a" style="left:1244px;top:941px;width:15px;height:15px;border:1px solid #ababab;background:#fff"></div>
<svg style="left:790px;top:945px" width="4" height="7" viewBox="0 0 4 7"><path d="M4 0V7L0 3.5Z" fill="#666"/></svg>
<svg style="left:1250px;top:945px" width="4" height="7" viewBox="0 0 4 7"><path d="M0 0V7L4 3.5Z" fill="#666"/></svg>
<div class="a" style="left:0px;top:962px;width:1280px;height:22px;background:#217346"></div>
<div class="t" style="left:7px;top:968px;font-size:11px;color:#fff;letter-spacing:-0.8px">READY</div>
<svg style="left:60px;top:966px" width="14" height="14" viewBox="0 0 14 14"><circle cx="3" cy="3" r="2.9" fill="#eef2ee"/><rect x="1" y="7" width="1" height="6" fill="#fff"/><rect x="1" y="12" width="12" height="1" fill="#fff"/><rect x="12" y="1" width="1" height="12" fill="#fff"/><rect x="7" y="1" width="6" height="3" fill="#fff"/><rect x="8" y="2" width="4" height="1" fill="#cfe3d5"/><rect x="3" y="8" width="2" height="1" fill="#fff"/><rect x="6" y="8" width="2" height="1" fill="#fff"/><rect x="9" y="8" width="2" height="1" fill="#fff"/><rect x="3" y="10" width="2" height="1" fill="#fff"/><rect x="6" y="10" width="2" height="1" fill="#fff"/><rect x="9" y="10" width="2" height="1" fill="#fff"/><rect x="6" y="6" width="2" height="1" fill="#fff"/><rect x="9" y="6" width="2" height="1" fill="#fff"/></svg>
<div class="a" style="left:988px;top:962px;width:38px;height:22px;background:#185c36"></div>
<svg style="left:999px;top:966px" width="15" height="14" viewBox="0 0 15 14"><path d="M0.5 0.5H14.5V13.5H0.5ZM0.5 4.5H14.5M0.5 9H14.5M5 0.5V13.5M10 0.5V13.5" fill="none" stroke="#fff"/></svg>
<svg style="left:1038px;top:966px" width="15" height="14" viewBox="0 0 15 14"><path d="M0.5 0.5H14.5V13.5H0.5Z" fill="none" stroke="#fff"/><path d="M3.5 2.5H11.5V11.5H3.5ZM5 5H10M5 7H10M5 9H10" fill="none" stroke="#fff"/></svg>
<svg style="left:1076px;top:966px" width="15" height="14" viewBox="0 0 15 14"><path d="M0.5 0.5H14.5V13.5H0.5Z" fill="none" stroke="#fff"/><rect x="3" y="1" width="3" height="7" fill="#fff"/><rect x="8" y="1" width="3" height="7" fill="#fff"/></svg>
<div class="a" style="left:1107px;top:972px;width:6px;height:2px;background:#fff"></div>
<div class="a" style="left:1117px;top:972px;width:100px;height:1px;background:#fff"></div>
<div class="a" style="left:1164px;top:967px;width:5px;height:11px;background:#fff"></div>
<div class="a" style="left:1221px;top:972px;width:9px;height:2px;background:#fff"></div>
<div class="a" style="left:1224px;top:969px;width:2px;height:9px;background:#fff"></div>
<div class="t" style="left:1244px;top:968px;font-size:11px;color:#fff;letter-spacing:0.2px">100%</div>
<div class="a" style="left:0px;top:984px;width:1280px;height:40px;background:#67c7e9"></div>
<div class="a" style="left:0px;top:984px;width:1280px;height:1px;background:#574c4a"></div>
<div class="a" style="left:0px;top:985px;width:1280px;height:1px;background:#5fd3f6"></div>
<div class="a" style="left:0px;top:1022px;width:1280px;height:1px;background:#5fd3f6"></div>
<div class="a" style="left:0px;top:1023px;width:1280px;height:1px;background:#574c4a"></div>
<div class="a" style="left:0px;top:984px;width:1px;height:40px;background:#574c4a"></div>
<div class="a" style="left:113px;top:985px;width:59px;height:39px;background:#7dd1ef;border-left:1px solid #2b3a42;border-right:1px solid #2b3a42"></div>
<div class="a" style="left:237px;top:985px;width:60px;height:39px;background:#7dd1ef;border-left:1px solid #2b3a42;border-right:1px solid #2b3a42"></div>
<div class="a" style="left:299px;top:985px;width:60px;height:39px;background:#7dd1ef;border-left:1px solid #2b3a42;border-right:1px solid #2b3a42"></div>
<div class="a" style="left:424px;top:985px;width:59px;height:39px;background:#7dd1ef;border-left:1px solid #2b3a42;border-right:1px solid #2b3a42"></div>
<div class="a" style="left:485px;top:985px;width:60px;height:39px;background:#7dd1ef;border-left:1px solid #2b3a42;border-right:1px solid #2b3a42"></div>
<div class="a" style="left:547px;top:985px;width:60px;height:39px;background:#7dd1ef;border-left:1px solid #2b3a42;border-right:1px solid #2b3a42"></div>
<div class="a" style="left:609px;top:985px;width:59px;height:39px;background:#93daf3;border-left:1px solid #2b3a42;border-right:1px solid #2b3a42"></div>
<svg style="left:11px;top:990px" width="28" height="27" viewBox="0 0 28 27"><path d="M0.8 4.5L12 3V13H0.8ZM13 2.8L27.1 0.8V13H13ZM0.8 14H12V24L0.8 22ZM13 14H27.1V26L13 24Z" fill="#fff" stroke="#4aa6c6" stroke-width="0.6" stroke-opacity="0.7"/></svg>
<svg style="left:66px;top:988px" width="31" height="31" viewBox="0 0 31 31"><defs><linearGradient id="ffb" x1="1" y1="0" x2="0" y2="1"><stop offset="0" stop-color="#ffe23a"/><stop offset="0.45" stop-color="#ff9a1f"/><stop offset="0.8" stop-color="#ff3030"/><stop offset="1" stop-color="#d4157a"/></linearGradient><linearGradient id="ffg" x1="0" y1="0" x2="0" y2="1"><stop offset="0" stop-color="#0a84ff"/><stop offset="1" stop-color="#3b1fa0"/></linearGradient></defs>
<circle cx="15.5" cy="16.5" r="14.3" fill="url(#ffb)"/><path d="M1 2H19L16 4H7Z" fill="#67c7e9"/>
<circle cx="16" cy="12.5" r="9.3" fill="url(#ffg)"/>
<path d="M4 3.5L6.5 8C9 6 12 5.5 14.5 6.5L12.5 9.5L15 11.5C12 12 10.5 14 11.5 16C13 18.5 17.5 19.5 21 17.5C19 21.5 14 23 10 21.5C5.5 19.5 3.5 14 4.5 9Z" fill="#ff5a1f"/>
<path d="M20.5 1C26 4 30 10 30 16.5C30 20.5 28.5 24 26 26.5C27 20 25.5 14 22 11C23 8 22.5 4 20.5 1Z" fill="#ffd22e"/>
<path d="M13 17C15 16 18 16 20 16.5C18 18.5 15 18.5 13 17Z" fill="#ff9a1f"/></svg>
<svg style="left:127px;top:988px" width="33" height="33" viewBox="0 0 33 33"><rect x="0.5" y="0.5" width="14" height="24" fill="#1f86d6" stroke="#fff" stroke-width="1"/><path d="M0.5 7H14.5" stroke="#fff"/><rect x="6" y="18.5" width="26" height="13.5" rx="1.5" fill="#6d8da8" stroke="#fff" stroke-width="1.2"/><rect x="15" y="16" width="8" height="3" rx="1" fill="#6d8da8" stroke="#fff" stroke-width="1"/><path d="M8 22.5H30" stroke="#fff"/></svg>
<svg style="left:192px;top:993px" width="27" height="22" viewBox="0 0 27 22"><defs><linearGradient id="ps" x1="0" y1="0" x2="0" y2="1"><stop offset="0" stop-color="#9cc8ee"/><stop offset="0.45" stop-color="#3d86d0"/><stop offset="1" stop-color="#1f5fae"/></linearGradient></defs><path d="M6 0.8H25Q26.5 0.8 26 2.5L21 19.5Q20.5 21 19 21H1.5Q0 21 0.5 19.5L5 2Q5.3 0.8 6 0.8Z" fill="url(#ps)" stroke="#d8ecfa" stroke-width="0.9"/><path d="M8 4L15 10L7 17" fill="none" stroke="#fff" stroke-width="2.2"/><path d="M12 17.5H18" stroke="#cfe6f8" stroke-width="1.6"/></svg>
<svg style="left:251px;top:990px" width="33" height="30" viewBox="0 0 33 30"><defs><linearGradient id="fo" x1="0" y1="0" x2="0" y2="1"><stop offset="0" stop-color="#fff6cf"/><stop offset="1" stop-color="#f1d070"/></linearGradient></defs>
<rect x="4.5" y="1.5" width="12" height="8" rx="1" fill="#f6e4a0" stroke="#d9b459" stroke-width="0.8"/><rect x="11.5" y="3.5" width="12" height="8" rx="1" fill="#f6e4a0" stroke="#d9b459" stroke-width="0.8"/><rect x="18.5" y="5.5" width="13" height="8" rx="1" fill="#f6e4a0" stroke="#d9b459" stroke-width="0.8"/>
<rect x="5" y="3" width="10" height="2.5" fill="#fff"/><rect x="12" y="5" width="10" height="2.5" fill="#fff"/><rect x="19" y="7" width="11" height="2.5" fill="#fff"/>
<rect x="5" y="2.5" width="3" height="2" fill="#1cb023"/><rect x="12.5" y="4.5" width="3" height="2" fill="#d62b1f"/><rect x="20" y="7" width="3" height="2" fill="#2f8fe0"/>
<path d="M0.5 10.5Q0.5 9 2 9H31Q32 9 32 10.5V26Q32 27.5 30.5 27.5H2Q0.5 27.5 0.5 26Z" fill="url(#fo)" stroke="#d4ab4a" stroke-width="0.9"/>
<path d="M4.5 28.5V19Q4.5 17 6.5 17H26Q28 17 28 19V28.5H22.5V22H10V28.5Z" fill="#c5e8f8" fill-opacity="0.92" stroke="#3a9ad9" stroke-width="0.9"/>
<path d="M6.5 18.5L9 16M7 18L5 21" stroke="#fff" stroke-width="0.8"/></svg>
<svg style="left:314px;top:988px" width="31" height="31" viewBox="0 0 31 31"><path d="M15.5 15.5L2.51 8A15 15 0 0 1 28.49 8Z" fill="#db4437"/><path d="M15.5 15.5L28.49 8A15 15 0 0 1 15.5 30.5Z" fill="#fcc934"/><path d="M15.5 15.5L15.5 30.5A15 15 0 0 1 2.51 8Z" fill="#1e9e55"/><path d="M8 11.5L2.51 8A15 15 0 0 1 8 2.5Z" fill="#e05c4e" fill-opacity="0.5"/><circle cx="15.5" cy="15.5" r="6.9" fill="#fff"/><circle cx="15.5" cy="15.5" r="5.5" fill="#4a8af4"/></svg>
<svg style="left:375px;top:988px" width="32" height="32" viewBox="0 0 32 32"><rect x="1" y="1" width="30" height="30" fill="#fff" stroke="#2f5fa8" stroke-width="2"/><rect x="5.5" y="11.5" width="20" height="16" fill="#fff" stroke="#707070"/><rect x="6" y="12" width="19" height="3.5" fill="#c8c8c8"/><path d="M5.5 15.5H25.5M5.5 19.5H25.5M5.5 23.5H25.5M10.5 15.5V27.5M15.5 15.5V27.5M20.5 15.5V27.5" stroke="#707070" stroke-width="0.9"/><rect x="11" y="20" width="4.5" height="3.5" fill="#f5a00f"/><path d="M16 13L21 8L17 4M21 8L25 4M21 8L27 11" fill="none" stroke="#6f88c0" stroke-width="0.8"/><circle cx="16" cy="13" r="2" fill="#2c4fa0"/><circle cx="21" cy="8" r="1.8" fill="#2c4fa0"/><circle cx="17" cy="4.5" r="1.7" fill="#2c4fa0"/><circle cx="25.5" cy="4.5" r="1.7" fill="#2c4fa0"/><circle cx="27" cy="11" r="1.9" fill="#2c4fa0"/></svg>
<svg style="left:437px;top:988px" width="33" height="32" viewBox="0 0 33 32"><defs><linearGradient id="gr" x1="0" y1="0" x2="0.3" y2="1"><stop offset="0" stop-color="#dfe6f6"/><stop offset="0.5" stop-color="#d8f6fb"/><stop offset="1" stop-color="#8fb0e8"/></linearGradient></defs><path d="M22.55 13.40 L24.71 14.55 L24.01 16.99 L21.57 16.82 L20.06 19.06 L21.14 21.26 L19.13 22.82 L17.26 21.25 L14.73 22.17 L14.30 24.58 L11.76 24.67 L11.17 22.30 L8.58 21.55 L6.82 23.26 L4.71 21.83 L5.62 19.56 L3.96 17.44 L1.54 17.78 L0.67 15.39 L2.74 14.09 L2.65 11.40 L0.49 10.25 L1.19 7.81 L3.63 7.98 L5.14 5.74 L4.06 3.54 L6.07 1.98 L7.94 3.55 L10.47 2.63 L10.90 0.22 L13.44 0.13 L14.03 2.50 L16.62 3.25 L18.38 1.54 L20.49 2.97 L19.58 5.24 L21.24 7.36 L23.66 7.02 L24.53 9.41 L22.46 10.71Z M18.90 12.40 A6.3 6.3 0 1 0 6.30 12.40 A6.3 6.3 0 1 0 18.90 12.40Z" fill="url(#gr)" fill-rule="evenodd" stroke="#5d6570" stroke-width="0.7"/><path d="M29.97 25.04 L31.06 26.12 L30.03 27.77 L28.58 27.27 L26.90 28.34 L26.73 29.87 L24.80 30.10 L24.28 28.65 L22.40 28.00 L21.10 28.82 L19.72 27.45 L20.53 26.15 L19.86 24.27 L18.41 23.77 L18.61 21.83 L20.14 21.65 L21.19 19.96 L20.68 18.51 L22.32 17.47 L23.41 18.55 L25.39 18.31 L26.20 17.01 L28.04 17.64 L27.88 19.17 L29.30 20.57 L30.82 20.39 L31.48 22.23 L30.18 23.05Z M27.40 23.50 A2.4 2.4 0 1 0 22.60 23.50 A2.4 2.4 0 1 0 27.40 23.50Z" fill="url(#gr)" fill-rule="evenodd" stroke="#5d6570" stroke-width="0.7"/></svg>
<svg style="left:501px;top:988px" width="30" height="31" viewBox="0 0 30 31"><defs><linearGradient id="aa" x1="0" x2="1"><stop offset="0" stop-color="#101010"/><stop offset="0.5" stop-color="#00a8de"/><stop offset="1" stop-color="#00abe0"/></linearGradient></defs><circle cx="15" cy="15.3" r="13.8" fill="url(#aa)" stroke="#e8f8fd" stroke-width="1.4"/><path d="M6.5 21.5L14 6Q15 4.5 16 6L20 17.5M6.5 21.5Q12 15 20 17.5" fill="none" stroke="#fff" stroke-width="1.2"/><circle cx="21.6" cy="19.6" r="1.8" fill="none" stroke="#fff" stroke-width="1.1"/></svg>
<svg style="left:563px;top:988px" width="30" height="31" viewBox="0 0 30 31"><defs><linearGradient id="aa" x1="0" x2="1"><stop offset="0" stop-color="#101010"/><stop offset="0.5" stop-color="#00a8de"/><stop offset="1" stop-color="#00abe0"/></linearGradient></defs><circle cx="15" cy="15.3" r="13.8" fill="url(#aa)" stroke="#e8f8fd" stroke-width="1.4"/><path d="M6.5 21.5L14 6Q15 4.5 16 6L20 17.5M6.5 21.5Q12 15 20 17.5" fill="none" stroke="#fff" stroke-width="1.2"/><circle cx="21.6" cy="19.6" r="1.8" fill="none" stroke="#fff" stroke-width="1.1"/></svg>
<svg style="left:624px;top:989px" width="31" height="30" viewBox="0 0 31 30"><path d="M0 4L17 0V30L0 26Z" fill="#1d6b3b"/><rect x="16" y="4" width="14" height="22" fill="#fff" stroke="#1d6b3b" stroke-width="1.5"/><path d="M18 9H28M18 13H28M18 17H28M18 21H28M22.5 5V25" stroke="#1d6b3b" stroke-width="1"/><text x="3" y="21" font-size="14" font-weight="bold" fill="#fff" font-family="Liberation Sans">X</text></svg>
<svg style="left:1086px;top:1002px" width="8" height="5" viewBox="0 0 8 5"><path d="M0 4.5L4 0.5L8 4.5Z" fill="#111"/></svg>
<svg style="left:1106px;top:996px" width="17" height="17" viewBox="0 0 17 17"><path d="M1 1V16" stroke="#fff" stroke-width="1.6"/><path d="M2 1.5C6 0 8 4 13 2V9C8 11 6 7 2 8.5Z" fill="#fff"/><circle cx="11.5" cy="12" r="4.5" fill="#d9342b" stroke="#fff" stroke-width="0.8"/><path d="M9.5 10L13.5 14M13.5 10L9.5 14" stroke="#fff" stroke-width="1.2"/></svg>
<svg style="left:1130px;top:996px" width="17" height="17" viewBox="0 0 17 17"><path d="M2 2H15V9C15 13 8 15 8 15C8 15 2 13 2 9Z" fill="#2b2b2b"/><path d="M8.5 3V13M3 8H14" stroke="#bbb"/><path d="M1 1L16 16M16 1L1 16" stroke="#e81123" stroke-width="2"/><rect x="0" y="0" width="17" height="2" fill="#e81123"/></svg>
<svg style="left:1154px;top:996px" width="17" height="17" viewBox="0 0 17 17"><rect x="1" y="1" width="5" height="5" rx="2" fill="none" stroke="#fff" stroke-width="1.2"/><path d="M3.5 6V14" stroke="#fff" stroke-width="1.2"/><rect x="7" y="3.5" width="9" height="8" fill="none" stroke="#fff" stroke-width="1.2"/><path d="M9 15H15M12 11.5V15" stroke="#fff" stroke-width="1.2"/></svg>
<svg style="left:1178px;top:996px" width="17" height="17" viewBox="0 0 17 17"><path d="M1 6H5L9 2V15L5 11H1Z" fill="#fff" stroke="#888" stroke-width="0.6"/><path d="M11 5C13 7 13 10 11 12M13 3C16 6 16 11 13 14" fill="none" stroke="#fff" stroke-width="1.2"/></svg>
<div class="t" style="left:1213px;top:990px;font-size:12px;color:#111;">11:13 AM</div>
<div class="t" style="left:1214px;top:1007px;font-size:12px;color:#111;">8/6/2019</div>
<div class="a" style="left:1278px;top:985px;width:1px;height:38px;background:#5fd3f6"></div>
<div class="a" style="left:1279px;top:984px;width:1px;height:40px;background:#574c4a"></div>
<div class="a" style="left:1px;top:985px;width:1px;height:38px;background:#5fd3f6"></div>
</body></html>
